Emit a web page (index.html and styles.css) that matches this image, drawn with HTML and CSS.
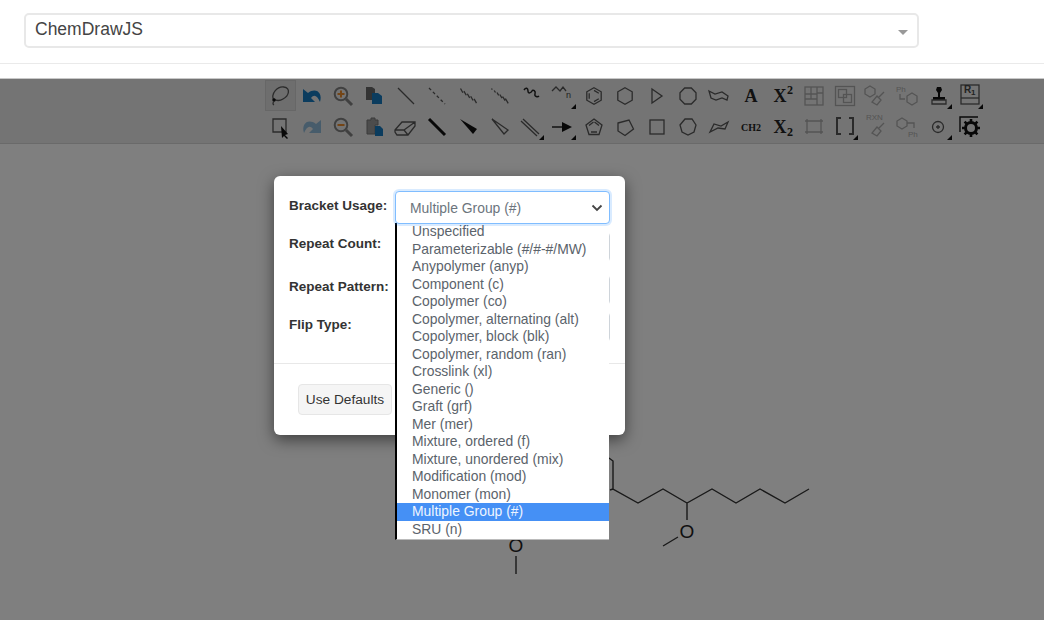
FILE: index.html
```html
<!DOCTYPE html>
<html lang="en">
<head>
<meta charset="utf-8">
<title>ChemDrawJS</title>
<link rel="stylesheet" href="styles.css">
</head>
<body>
<header class="header">
  <div class="picker"><span>ChemDrawJS</span><i class="picker-arrow"></i></div>
</header>
<main class="app">
  <div class="toolbar">
    <!-- row 1 -->
    <div class="cell sel"><svg class="ic" viewBox="-15 -15 30 30"><path d="M-7 5C-11-3-3-10 3-9 10-8 8 0 2 3-1 5-5 5-7 3"/><circle class="f" cx="-7" cy="4" r="1.700"/><path d="M-7 5q-2 3 0 4"/></svg></div>
    <div class="cell"><svg class="ic" viewBox="-15 -15 30 30"><path class="blue" d="M-9-7V6H3L-1 2C2-2 5-1 8 6 11-3 4-9-4-3z"/></svg></div>
    <div class="cell"><svg class="ic" viewBox="-15 -15 30 30"><circle class="gr2" cx="-2" cy="-2" r="6.300"/><path class="gr3" d="M3 3 9 9"/><path class="or" d="M-5.500-2h7M-2-5.500v7"/></svg></div>
    <div class="cell"><svg class="ic" viewBox="-15 -15 30 30"><path class="pg" d="M-9-9h6l3 2v11h-9z"/><path class="blue" d="M-3-3H3L7 0V8H-3z"/></svg></div>
    <div class="cell"><svg class="ic" viewBox="-15 -15 30 30"><path d="M-8-8 8 8"/></svg></div>
    <div class="cell"><svg class="ic" viewBox="-15 -15 30 30"><path class="dash" d="M-8-8 8 8"/></svg></div>
    <div class="cell"><svg class="ic" viewBox="-15 -15 30 30"><path d="M-8.500-7.500l2.400 4.200M-5.100-4.900l2.400 4.200M-1.700-2.300l2.400 4.200M1.700.3l2.400 4.200M5.100 2.900l2.400 4.200"/></svg></div>
    <div class="cell"><svg class="ic" viewBox="-15 -15 30 30"><path d="M-8.500-7.500l.8 1.200M-5.800-5.500l1.300 2M-3-3.500l1.700 2.800M-.2-1.500l2.200 3.600M2.600.5l2.500 4.200M5.400 2.500l2.800 4.800"/></svg></div>
    <div class="cell"><svg class="ic" viewBox="-15 -15 30 30"><path class="dk" d="M-7-6c2-3 4-2 4 1s3 2 4 0 4 0 3 3 3 3 4 2"/></svg></div>
    <div class="cell"><svg class="ic" viewBox="-15 -15 30 30"><path d="M-11-5-7-9-3-5 0-9 3-5"/><text class="tn" x="3" y="2">n</text><path class="f" d="M13 8v5H8z"/></svg></div>
    <div class="cell"><svg class="ic" viewBox="-15 -15 30 30"><path d="M0-8.300 7.200-4.200V4.200L0 8.300-7.200 4.200V-4.200zM-4.800-2.800V2.800M0-5.600 4.800-2.800M4.800 2.800 0 5.600"/></svg></div>
    <div class="cell"><svg class="ic" viewBox="-15 -15 30 30"><path d="M0-8.300 7.200-4.200V4.200L0 8.300-7.200 4.200V-4.200z"/></svg></div>
    <div class="cell"><svg class="ic" viewBox="-15 -15 30 30"><path d="M-5-7 5 0-5 7z"/></svg></div>
    <div class="cell"><svg class="ic" viewBox="-15 -15 30 30"><path d="M-3.300-8H3.300L8-3.300V3.300L3.300 8H-3.300L-8 3.300V-3.300z"/></svg></div>
    <div class="cell"><svg class="ic" viewBox="-15 -15 30 30"><path d="M-10-5-4-2 3-4 9 0 8 4 3 2-3 4-8 2z"/></svg></div>
    <div class="cell"><svg class="ic" viewBox="-15 -15 30 30"><text class="serif mid" x="0" y="6" text-anchor="middle">A</text></svg></div>
    <div class="cell"><svg class="ic" viewBox="-15 -15 30 30"><text class="serif big" x="-2" y="6" text-anchor="middle">X</text><text class="serif" x="8" y="-2" text-anchor="middle">2</text></svg></div>
    <div class="cell"><svg class="ic faint" viewBox="-15 -15 30 30"><rect x="-9" y="-9" width="18" height="18"/><path d="M-9-2H-3V-9M-3-2V3H-9M3-9V-2H-3M9-3H3V3H-3M3 3V9"/><path class="w2" d="M-6-6h.1M5-5h.1M-5 6h.1M6 6h.1"/></svg></div>
    <div class="cell"><svg class="ic faint" viewBox="-15 -15 30 30"><rect x="-9.500" y="-9.500" width="19" height="19"/><rect x="-6.500" y="-6.500" width="8" height="8"/><rect x="-1.500" y="-1.500" width="8" height="8"/></svg></div>
    <div class="cell"><svg class="ic faint" viewBox="-15 -15 30 30"><path d="M-6-10-1-7V-2L-6 1-11-2V-7zM8-4 2 2M1 0 5 4 1 9-4 6z"/></svg></div>
    <div class="cell"><svg class="ic faint" viewBox="-15 -15 30 30"><text class="tph" x="-12" y="-4">Ph</text><path d="M-8-2V3H-3M4-3 9 0V6L4 9-1 6V0z"/></svg></div>
    <div class="cell"><svg class="ic" viewBox="-15 -15 30 30"><path class="f" d="M-2-9H2L3-6 1-3V1H6V4H-6V1H-1V-3L-3-6z"/><path d="M-7 4H7V8H-7z"/><path class="f" d="M13 8v5H8z"/></svg></div>
    <div class="cell"><svg class="ic" viewBox="-15 -15 30 30"><rect x="-9" y="-11" width="18" height="19"/><path d="M-9 2H9"/><text class="tr" x="-6" y="-3">R</text><text class="tr1" x="1" y="-1">1</text><path class="f" d="M13 8v5H8z"/></svg></div>
    <!-- row 2 -->
    <div class="cell"><svg class="ic" viewBox="-15 -15 30 30"><path d="M-8-8H5V5H-8z"/><path class="f" d="M0-1 7 7 4 8 7 11 6 12 3 9 1 11z"/></svg></div>
    <div class="cell"><svg class="ic" viewBox="-15 -15 30 30"><path class="bluel" d="M9-7V6H-3L1 2C-2-2-5-1-8 6-11-3-4-9 4-3z"/></svg></div>
    <div class="cell"><svg class="ic" viewBox="-15 -15 30 30"><circle class="gr2" cx="-2" cy="-2" r="6.300"/><path class="gr3" d="M3 3 9 9"/><path class="or" d="M-5.500-2h7"/></svg></div>
    <div class="cell"><svg class="ic" viewBox="-15 -15 30 30"><path class="f2" d="M-8-7H-4V-9H0V-7H3V-2H0V7H-8z"/><path class="blue" d="M0-1H5L8 2V9H0z"/></svg></div>
    <div class="cell"><svg class="ic" viewBox="-15 -15 30 30"><path d="M-11 3-4-5H9V-1L2 8H-9L-11 5zM-11 3H-2L2 8M-2 3 9-5"/></svg></div>
    <div class="cell"><svg class="ic" viewBox="-15 -15 30 30"><path class="w3k" d="M-8-8 8 8"/></svg></div>
    <div class="cell"><svg class="ic" viewBox="-15 -15 30 30"><path class="f" d="M-9-8 8 2 4 7z"/></svg></div>
    <div class="cell"><svg class="ic" viewBox="-15 -15 30 30"><path d="M-8-8 8 3 4 7z"/></svg></div>
    <div class="cell"><svg class="ic" viewBox="-15 -15 30 30"><path d="M-8-8 8 7M-10-6 6 9"/><path class="f" d="M13 8v5H8z"/></svg></div>
    <div class="cell"><svg class="ic" viewBox="-15 -15 30 30"><path class="w2" d="M-11 0H0"/><path class="f" d="M-1-5 9 0-1 5z"/><path class="f" d="M13 8v5H8z"/></svg></div>
    <div class="cell"><svg class="ic" viewBox="-15 -15 30 30"><path d="M0-8 8-2 5 7.500H-5L-8-2zM-5-1.500-.500-5M.500-5 5-1.500M-3 5H3"/></svg></div>
    <div class="cell"><svg class="ic" viewBox="-15 -15 30 30"><path d="M-7-4 4-7 8.500 2 0 8.500-7 4z"/></svg></div>
    <div class="cell"><svg class="ic" viewBox="-15 -15 30 30"><rect x="-7" y="-7" width="14" height="14"/></svg></div>
    <div class="cell"><svg class="ic" viewBox="-15 -15 30 30"><path d="M-3-8H4L8-2 6 5 0 8-6 5-8-2z"/></svg></div>
    <div class="cell"><svg class="ic" viewBox="-15 -15 30 30"><path d="M-9 5-5-3 2-1 9-5 6 2-1 1z"/></svg></div>
    <div class="cell"><svg class="ic" viewBox="-15 -15 30 30"><text class="serif small" x="0" y="4" text-anchor="middle">CH2</text></svg></div>
    <div class="cell"><svg class="ic" viewBox="-15 -15 30 30"><text class="serif big" x="-2" y="6" text-anchor="middle">X</text><text class="serif" x="8" y="9" text-anchor="middle">2</text></svg></div>
    <div class="cell"><svg class="ic faint" viewBox="-15 -15 30 30"><path d="M-7-8V7M7-8V7M-9-6H9M-9 5H9"/><path class="w2" d="M-7-6h.1M7-6h.1M-7 5h.1M7 5h.1"/></svg></div>
    <div class="cell"><svg class="ic" viewBox="-15 -15 30 30"><path class="w2" d="M-4-9H-8V7H-4M4-9H8V7H4"/><path class="f" d="M13 8v5H8z"/></svg></div>
    <div class="cell"><svg class="ic faint" viewBox="-15 -15 30 30"><text class="tph" x="-10" y="-7">RXN</text><path d="M8-4 2 2M1 0 5 4 1 9-4 6z"/></svg></div>
    <div class="cell"><svg class="ic faint" viewBox="-15 -15 30 30"><path d="M-6-9-1-6V-1L-6 2-11-1V-6zM-1-4H6V1"/><text class="tph" x="0" y="10">Ph</text></svg></div>
    <div class="cell"><svg class="ic" viewBox="-15 -15 30 30"><circle cx="-1" cy="0" r="5.500"/><path d="M-3 0H1M-1-2V2"/><path class="f" d="M13 8v5H8z"/></svg></div>
    <div class="cell"><svg class="ic" viewBox="-15 -15 30 30"><path class="k" d="M-10 5V-10H8"/><circle class="gear" cx="1" cy="1" r="5.500"/><path class="gear2" d="M1-8V-5M1 7V10M-8 1H-5M7 1H10M-5.400-5.400-3.200-3.200M5.200 5.200 7.400 7.400M-5.400 7.400-3.200 5.200M5.200-3.200 7.400-5.400"/></svg></div>
  </div>
  <div class="canvas">
    <svg class="molecule" viewBox="0 144 1044 476">
      <path d="M609 458 613 461V489L638 503 663 489 687 503 712 489 736 503 760 489 785 503 809 489M613 489 610 490M687 503V520M663 546 678 537M516 556V574"/>
      <text x="687" y="538" text-anchor="middle">O</text>
      <text x="516" y="552" text-anchor="middle">O</text>
    </svg>
  </div>
  <div class="backdrop"></div>
  <div class="modal">
    <div class="modal-body">
      <div class="row"><label class="lbl lbl-first">Bracket Usage:</label><div class="field focus"><span>Multiple Group (#)</span><svg class="chev" viewBox="0 0 12 8"><path d="M1.500 1.500 6 6l4.500-4.500"/></svg></div></div>
      <div class="row"><label class="lbl">Repeat Count:</label><div class="field"></div></div>
      <div class="row"><label class="lbl">Repeat Pattern:</label><div class="field"></div></div>
      <div class="row"><label class="lbl lbl-flip">Flip Type:</label><div class="field"></div></div>
    </div>
    <div class="modal-foot"><button class="btn" type="button">Use Defaults</button></div>
    <ul class="list">
      <li>Unspecified</li>
      <li>Parameterizable (#/#-#/MW)</li>
      <li>Anypolymer (anyp)</li>
      <li>Component (c)</li>
      <li>Copolymer (co)</li>
      <li>Copolymer, alternating (alt)</li>
      <li>Copolymer, block (blk)</li>
      <li>Copolymer, random (ran)</li>
      <li>Crosslink (xl)</li>
      <li>Generic ()</li>
      <li>Graft (grf)</li>
      <li>Mer (mer)</li>
      <li>Mixture, ordered (f)</li>
      <li>Mixture, unordered (mix)</li>
      <li>Modification (mod)</li>
      <li>Monomer (mon)</li>
      <li class="on">Multiple Group (#)</li>
      <li>SRU (n)</li>
    </ul>
  </div>
</main>
</body>
</html>
```
FILE: styles.css
```css
* { box-sizing: border-box; }
html, body { margin: 0; height: 100%; overflow: hidden; }
body {
  display: flex;
  flex-direction: column;
  background: #fff;
  font-family: "Liberation Sans", Arial, sans-serif;
  font-size: 14px;
  color: #333;
}

.header {
  flex: none;
  height: 64px;
  padding: 13px 125px 0 24px;
  border-bottom: 1px solid #eaeaea;
  margin-bottom: 14px;
}
.picker {
  display: flex;
  align-items: center;
  justify-content: space-between;
  height: 35px;
  padding: 0 9px;
  border: 2px solid #e8e8e8;
  border-radius: 5px;
  font-size: 17.500px;
  color: #444;
}
.picker span { padding-bottom: 2px; }
.picker-arrow {
  width: 0;
  height: 0;
  margin-top: 4px;
  border-left: 5px solid transparent;
  border-right: 5px solid transparent;
  border-top: 5px solid #999;
}

.app {
  position: relative;
  flex: 1;
  display: flex;
  flex-direction: column;
  border-top: 1px solid #c8c8c8;
}
.toolbar {
  flex: none;
  display: grid;
  grid-template-columns: repeat(23, 31.35px);
  grid-auto-rows: 31px;
  height: 65px;
  padding: 1px 0 0 265px;
  background: #e8e8e8;
  border-bottom: 1px solid #d4d4d4;
}
.cell {
  display: flex;
  align-items: center;
  justify-content: center;
}
.sel {
  background: #dcdcdc;
  box-shadow: inset 0 0 0 1px #cfcfcf;
}
.ic {
  display: block;
  width: 30px;
  height: 30px;
  overflow: visible;
  fill: none;
  stroke: #555;
  stroke-width: 1.3;
}
.ic .f { fill: #111; stroke: none; }
.ic .f2 { fill: #999; stroke: #777; stroke-width: 1; }
.ic .pg { fill: #666; stroke: none; }
.ic .blue { fill: #1678bd; stroke: none; }
.ic .bluel { fill: #8fb8d6; stroke: none; }
.ic .w2 { stroke-width: 2; }
.ic .gr2 { stroke: #808080; stroke-width: 2; }
.ic .gr3 { stroke: #808080; stroke-width: 3; }
.ic .w3k { stroke-width: 3; stroke: #111; }
.ic .dk { stroke: #222; stroke-width: 1.500; }
.ic .or { stroke: #e98a2d; stroke-width: 2; }
.ic .dash { stroke-dasharray: 3 2.500; }
.ic .k { stroke: #111; stroke-width: 1.400; }
.ic .gear { stroke: #111; stroke-width: 3; fill: #e8e8e8; }
.ic .gear2 { stroke: #111; stroke-width: 2.600; }
.ic text { stroke: none; fill: #444; }
.ic .serif { font-family: "Liberation Serif", serif; font-weight: 700; font-size: 12px; fill: #222; }
.ic .mid { font-size: 18px; }
.ic .big { font-size: 18px; }
.ic .small { font-size: 10px; }
.ic .tn { font-family: "Liberation Sans", sans-serif; font-size: 9px; }
.ic .tr { font-family: "Liberation Sans", sans-serif; font-size: 10px; font-weight: 700; }
.ic .tr1 { font-family: "Liberation Sans", sans-serif; font-size: 8px; font-weight: 700; }
.ic .tph { font-family: "Liberation Sans", sans-serif; font-size: 8px; fill: #a8a8a8; }
.faint { stroke: #a8a8a8; }

.canvas {
  position: relative;
  flex: 1;
  background: #fff;
}
.molecule {
  position: absolute;
  left: 0;
  top: 0;
  width: 1044px;
  height: 476px;
  fill: none;
  stroke: #333;
  stroke-width: 1.400;
}
.molecule text {
  font-family: "Liberation Sans", sans-serif;
  font-size: 19px;
  fill: #222;
  stroke: none;
}

.backdrop {
  position: absolute;
  inset: 0;
  background: rgba(0, 0, 0, .5);
}
.modal {
  position: absolute;
  left: 274px;
  top: 97px;
  width: 351px;
  height: 259px;
  display: flex;
  flex-direction: column;
  background: #fff;
  border-radius: 6px;
  box-shadow: 0 5px 15px rgba(0, 0, 0, .5);
}
.modal-body {
  flex: none;
  display: flex;
  flex-direction: column;
  height: 188px;
  padding: 15px 15px 0;
  border-bottom: 1px solid #e8e8e8;
}
.row { display: flex; align-items: flex-start; margin-bottom: 13px; }
.row:first-child { margin-bottom: 8px; }
.row:nth-child(3) { margin-bottom: 7px; }
.lbl {
  flex: none;
  width: 106px;
  margin-top: 2px;
  font-size: 13.500px;
  font-weight: 700;
  line-height: 20px;
}
.lbl-first { margin-top: 5px; }
.lbl-flip { margin-top: 3px; }
.field {
  flex: 1;
  height: 30px;
  background: #fff;
  border: 1px solid #ced4da;
  border-radius: 4px;
}
.field.focus {
  position: relative;
  z-index: 2;
  display: flex;
  align-items: center;
  justify-content: space-between;
  height: 33px;
  padding: 0 6px 0 14px;
  border-color: #80bdff;
  box-shadow: 0 0 0 2px rgba(0, 123, 255, .15);
  color: #6c757d;
  font-size: 13.900px;
}
.chev {
  width: 12px;
  height: 8px;
  fill: none;
  stroke: #444;
  stroke-width: 1.800;
}
.modal-foot {
  flex: 1;
  padding: 20px 24px;
}
.btn {
  display: block;
  width: 94px;
  height: 31px;
  padding: 0;
  background: #f5f5f5;
  border: 1px solid #e6e6e6;
  border-radius: 4px;
  font: inherit;
  font-size: 13.700px;
  color: #333;
}
.list {
  position: absolute;
  z-index: 1;
  left: 121px;
  top: 47px;
  width: 214px;
  margin: 0;
  padding: 0 0 1px;
  list-style: none;
  background: #fff;
  border-left: 2px solid #000;
  border-bottom: 1px solid #bbb;
  color: #5b636b;
  font-size: 13.900px;
}
.list li {
  height: 17.500px;
  padding-left: 15px;
  line-height: 16.500px;
  white-space: nowrap;
}
.list .on {
  background: #4590f5;
  color: #eef5ff;
}
```
